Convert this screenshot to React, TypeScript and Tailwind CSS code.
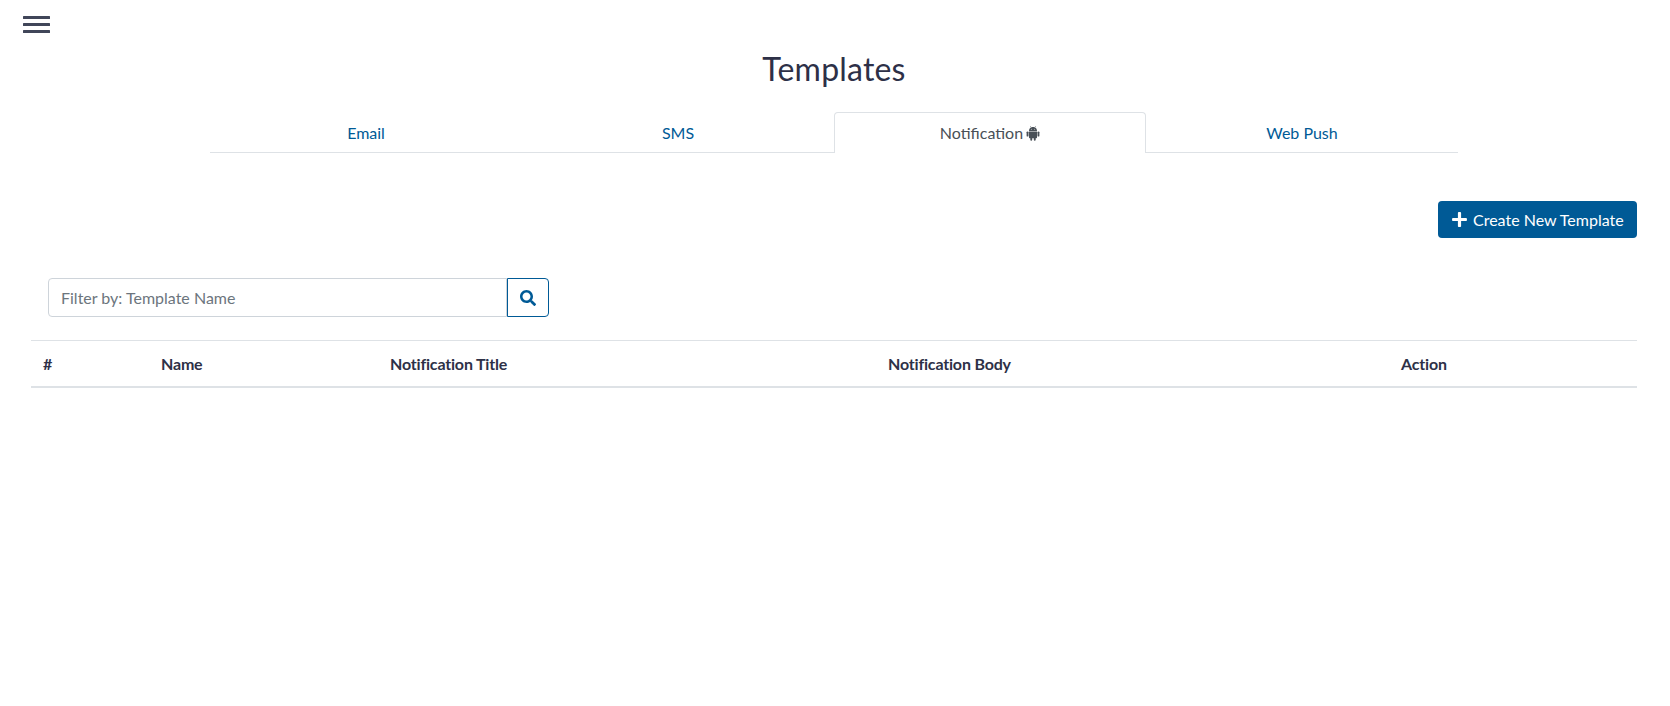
import { FaSearch, FaPlus } from "react-icons/fa";

const cols = [
  { label: "#", w: "w-[118px]" },
  { label: "Name", w: "w-[229px]" },
  { label: "Notification Title", w: "w-[498px]" },
  { label: "Notification Body", w: "w-[513px]" },
  { label: "Action", w: "w-[248px]" },
];

function AndroidIcon() {
  return (
    <svg width="14" height="16" viewBox="0 0 14 16" className="block" fill="#495057">
      <path d="M3 5.9C3 4.4 3.8 3.2 5 2.6L4.2 1.2 4.6 1 5.4 2.4C6.4 2 7.6 2 8.6 2.4L9.4 1 9.8 1.2 9 2.6C10.2 3.2 11 4.4 11 5.9Z" />
      <circle cx="5.3" cy="4.2" r="0.45" fill="#ffffff" />
      <circle cx="8.7" cy="4.2" r="0.45" fill="#ffffff" />
      <path d="M3 6.5H11V12.4C11 12.9 10.7 13.2 10.2 13.2H3.8C3.3 13.2 3 12.9 3 12.4Z" />
      <rect x="0.6" y="6.4" width="1.9" height="5.2" rx="0.95" />
      <rect x="11.5" y="6.4" width="1.9" height="5.2" rx="0.95" />
      <rect x="4.3" y="12" width="1.9" height="3.8" rx="0.95" />
      <rect x="7.8" y="12" width="1.9" height="3.8" rx="0.95" />
    </svg>
  );
}

export default function App() {
  return (
    <div className="w-[1670px] h-[706px] bg-white overflow-hidden font-['Lato','Open_Sans',sans-serif] text-[16px] text-[#2d3047]">
      <div className="h-[45px] pl-[23px] pt-[16px]">
        <svg width="27" height="18" viewBox="0 0 27 18" className="block">
          <rect x="0" y="0" width="27" height="3" rx="0.5" fill="#404659" />
          <rect x="0" y="7" width="27" height="3" rx="0.5" fill="#404659" />
          <rect x="0" y="14" width="27" height="3" rx="0.5" fill="#404659" />
        </svg>
      </div>
      <h1 className="text-center pr-[2px] text-[32px] leading-[38px] h-[38px] mt-[5px] font-normal tracking-[0.2px] text-[#2d3047]">Templates</h1>
      <div className="ml-[210px] w-[1248px] mt-[24px] flex h-[41px] border-b border-[#dee2e6]">
        <div className="w-[312px] pt-[1px] flex items-center justify-center text-[#005a96]">Email</div>
        <div className="w-[312px] pt-[1px] flex items-center justify-center text-[#005a96]">SMS</div>
        <div className="w-[312px] h-[41px] bg-white flex items-center justify-center gap-[3px] text-[#495057] border border-b-0 border-[#dee2e6] rounded-t-[4px]">
          Notification <AndroidIcon />
        </div>
        <div className="w-[312px] pt-[1px] flex items-center justify-center text-[#005a96]">Web Push</div>
      </div>
      <div className="flex justify-end pr-[33px] mt-[48px]">
        <button className="h-[37px] w-[199px] flex items-center pl-[14px] gap-[6px] bg-[#005a96] text-white rounded-[4px]">
          <FaPlus className="w-[15px] h-[17px]" /> Create New Template
        </button>
      </div>
      <div className="flex ml-[48px] mt-[40px] w-[501px] h-[39px]">
        <input
          placeholder="Filter by: Template Name"
          className="flex-1 min-w-0 h-full px-[12px] border border-[#ced4da] rounded-l-[4px] outline-none placeholder:text-[#6c757d]"
        />
        <button className="w-[42px] h-full flex items-center justify-center border border-[#005a96] rounded-r-[4px] text-[#005a96]">
          <FaSearch className="w-[16px] h-[16px]" />
        </button>
      </div>
      <div className="ml-[31px] mt-[23px] w-[1606px] flex border-t border-b-2 border-t-[#dee2e6] border-b-[#dee2e6] h-[48px] items-center font-bold tracking-[-0.18px]">
        {cols.map((c) => (
          <div key={c.label} className={`${c.w} px-[12px]`}>{c.label}</div>
        ))}
      </div>
    </div>
  );
}
